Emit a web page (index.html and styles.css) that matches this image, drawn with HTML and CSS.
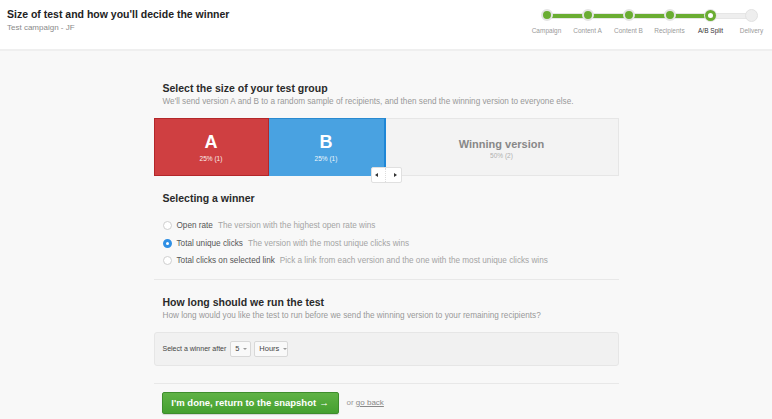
FILE: index.html
```html
<!DOCTYPE html>
<html>
<head>
<meta charset="utf-8">
<link rel="stylesheet" href="styles.css">
</head>
<body>
<header class="topbar">
  <div class="titles">
    <h1 class="page-title">Size of test and how you'll decide the winner</h1>
    <div class="page-sub">Test campaign - JF</div>
  </div>
  <ol class="stepper">
    <li class="step done"><span class="node"></span><span class="label">Campaign</span></li>
    <li class="step done"><span class="node"></span><span class="label">Content A</span></li>
    <li class="step done"><span class="node"></span><span class="label">Content B</span></li>
    <li class="step done"><span class="node"></span><span class="label">Recipients</span></li>
    <li class="step done active"><span class="node"></span><span class="label">A/B Split</span></li>
    <li class="step todo"><span class="node"></span><span class="label">Delivery</span></li>
  </ol>
</header>

<main class="content">
  <section class="sect">
    <h2 class="sect-title">Select the size of your test group</h2>
    <p class="sect-desc">We'll send version A and B to a random sample of recipients, and then send the winning version to everyone else.</p>
    <div class="split">
      <div class="seg seg-a"><span class="seg-big">A</span><span class="seg-small">25% (1)</span></div>
      <div class="seg seg-b"><span class="seg-big">B</span><span class="seg-small">25% (1)</span></div>
      <div class="seg seg-win"><span class="seg-mid">Winning version</span><span class="seg-small">50% (2)</span></div>
      <div class="handle"><span class="arr arr-l"></span><span class="handle-sep"></span><span class="arr arr-r"></span></div>
    </div>
  </section>

  <section class="sect winner">
    <h2 class="sect-title">Selecting a winner</h2>
    <ul class="radios">
      <li class="radio"><span class="dot"></span><span class="r-label">Open rate</span><span class="r-desc">The version with the highest open rate wins</span></li>
      <li class="radio checked"><span class="dot"></span><span class="r-label">Total unique clicks</span><span class="r-desc">The version with the most unique clicks wins</span></li>
      <li class="radio"><span class="dot"></span><span class="r-label">Total clicks on selected link</span><span class="r-desc">Pick a link from each version and the one with the most unique clicks wins</span></li>
    </ul>
  </section>

  <section class="sect duration">
    <h2 class="sect-title">How long should we run the test</h2>
    <p class="sect-desc">How long would you like the test to run before we send the winning version to your remaining recipients?</p>
    <div class="panel">
      <span class="panel-label">Select a winner after</span>
      <span class="select sel-num">5<span class="caret"></span></span>
      <span class="select sel-unit">Hours<span class="caret"></span></span>
    </div>
  </section>

  <div class="actions">
    <a class="btn-done">I'm done, return to the snapshot <span class="arrow">&#8594;</span></a>
    <span class="or">or <a class="back">go back</a></span>
  </div>
</main>
</body>
</html>
```
FILE: styles.css
```css
* { box-sizing: border-box; }
html, body { margin: 0; padding: 0; }
body {
  font-family: "Liberation Sans", Arial, sans-serif;
  background: #f8f8f8;
  color: #333;
  width: 772px;
  height: 419px;
  overflow: hidden;
}
.topbar {
  height: 51px;
  background: #fff;
  border-bottom: 2px solid #efefef;
  display: flex;
  justify-content: space-between;
  align-items: flex-start;
}
.titles { padding: 7px 0 0 7px; }
.page-title {
  margin: 0;
  font-size: 10.5px;
  font-weight: bold;
  color: #222;
  line-height: 14px;
}
.page-sub {
  font-size: 8px;
  color: #8a8a8a;
  line-height: 11px;
  margin-top: 1px;
}
.stepper {
  list-style: none;
  margin: 0;
  padding: 9px 0 0;
  display: flex;
}
.step {
  width: 41px;
  position: relative;
  display: flex;
  flex-direction: column;
  align-items: center;
}
.step + .step::before {
  content: "";
  position: absolute;
  left: -20px;
  width: 41px;
  top: 4px;
  height: 4px;
  background: #6aad32;
  border-top: 1px solid #e6e6e6;
  border-bottom: 1px solid #e6e6e6;
  background-clip: padding-box;
  z-index: 0;
}
.step.todo::before { background: #eeeeee; }
.node {
  position: relative;
  z-index: 1;
  width: 12px;
  height: 12px;
  border-radius: 50%;
  background: #6aad32;
  border: 2px solid #e4e4e4;
}
.step.active .node {
  background: #fff;
  border: 3px solid #6aad32;
  box-shadow: 0 0 0 1px #e4e4e4;
  width: 11px;
  height: 11px;
  margin-top: 0.5px;
}
.step.todo .node {
  width: 13px;
  height: 13px;
  margin-top: -0.5px;
  background: #eeeeee;
  border: 1px solid #e2e2e2;
}
.label {
  font-size: 6.5px;
  color: #9a9a9a;
  margin-top: 6px;
  white-space: nowrap;
}
.step.active .label { color: #333; }
.step.todo .label { margin-top: 5px; }

.content {
  width: 465px;
  margin: 0 auto;
  padding-top: 30px;
}
.sect-title {
  margin: 0;
  padding-left: 9px;
  font-size: 10.5px;
  font-weight: bold;
  color: #2a2a2a;
  line-height: 14px;
}
.sect-desc {
  margin: 1px 0 0;
  padding-left: 9px;
  font-size: 8.2px;
  color: #999;
  line-height: 12px;
}
.split {
  position: relative;
  margin-top: 10px;
  height: 58px;
  display: flex;
}
.seg {
  display: flex;
  flex-direction: column;
  align-items: center;
  justify-content: center;
}
.seg-a {
  flex: 0 0 115px;
  background: #cf3f41;
  border: 1px solid #b3272a;
  color: #fff;
}
.seg-b {
  flex: 0 0 117px;
  background: #49a2e1;
  border-top: 1px solid #2a8ad0;
  border-right: 2px solid #1e86d6;
  color: #fff;
}
.seg-win {
  flex: 1;
  background: #f3f3f3;
  border: 1px solid #e6e6e6;
  border-left: 0;
  color: #888;
}
.seg-big {
  font-size: 18px;
  font-weight: bold;
  line-height: 20px;
  margin-top: 1px;
}
.seg-mid {
  font-size: 11px;
  font-weight: bold;
  color: #888;
  line-height: 14px;
  margin-top: 4px;
}
.seg-small {
  font-size: 6.5px;
  line-height: 10px;
  margin-top: 2px;
  opacity: 0.9;
}
.seg-win .seg-small { color: #aaa; margin-top: 0; }
.handle {
  position: absolute;
  left: 217px;
  top: 49px;
  width: 31px;
  height: 16px;
  background: #fff;
  border: 1px solid #e0e0e0;
  border-radius: 2px;
  display: flex;
  align-items: center;
  justify-content: space-around;
  z-index: 2;
}
.arr {
  width: 0; height: 0;
  border-top: 2.5px solid transparent;
  border-bottom: 2.5px solid transparent;
}
.arr-l { border-right: 3px solid #333; }
.arr-r { border-left: 3px solid #333; }
.handle-sep {
  width: 0;
  height: 14px;
  border-left: 1px dotted #ddd;
}

.winner { margin-top: 15px; }
.radios {
  list-style: none;
  margin: 12px 0 0;
  padding: 0 0 9px 9px;
  border-bottom: 1px solid #e8e8e8;
}
.radio {
  display: flex;
  align-items: center;
  height: 17.5px;
  font-size: 8.2px;
}
.dot {
  width: 9px;
  height: 9px;
  border-radius: 50%;
  border: 1px solid #cfcfcf;
  background: #fff;
  margin-right: 5px;
  flex: none;
}
.radio.checked .dot {
  background: #fff;
  border: 3px solid #2f8fe4;
}
.r-label { color: #555; margin-right: 5px; }
.r-desc { color: #a4a4a4; }

.duration { margin-top: 15px; }
.panel {
  margin-top: 10px;
  height: 34px;
  background: #f1f1f1;
  border: 1px solid #e6e6e6;
  border-radius: 3px;
  display: flex;
  align-items: center;
  padding-left: 8px;
  font-size: 7px;
  color: #444;
}
.panel-label { margin-right: 4px; }
.select {
  height: 16px;
  border: 1px solid #d8d8d8;
  border-radius: 2px;
  background: #f9f9f9;
  display: inline-flex;
  align-items: center;
  padding: 0 4px;
  font-size: 7.5px;
  color: #444;
  margin-right: 3px;
}
.caret {
  margin-left: 4px;
  width: 0; height: 0;
  border-left: 2px solid transparent;
  border-right: 2px solid transparent;
  border-top: 2px solid #999;
}
.sel-num { width: 21px; }
.sel-unit { width: 34px; }

.actions {
  margin-top: 17px;
  border-top: 1px solid #e8e8e8;
  padding: 8px 0 0 8px;
  display: flex;
  align-items: center;
}
.btn-done {
  width: 177px;
  height: 22px;
  background: linear-gradient(#5fb245, #45a030);
  border: 1px solid #3e8d2c;
  border-radius: 2px;
  color: #fff;
  font-size: 9.5px;
  font-weight: bold;
  display: flex;
  align-items: center;
  justify-content: center;
  box-shadow: 0 1px 1px rgba(0,0,0,0.15);
}
.arrow { margin-left: 3px; }
.or {
  margin-left: 8px;
  font-size: 8px;
  color: #999;
}
.back { color: #888; text-decoration: underline; }
```
